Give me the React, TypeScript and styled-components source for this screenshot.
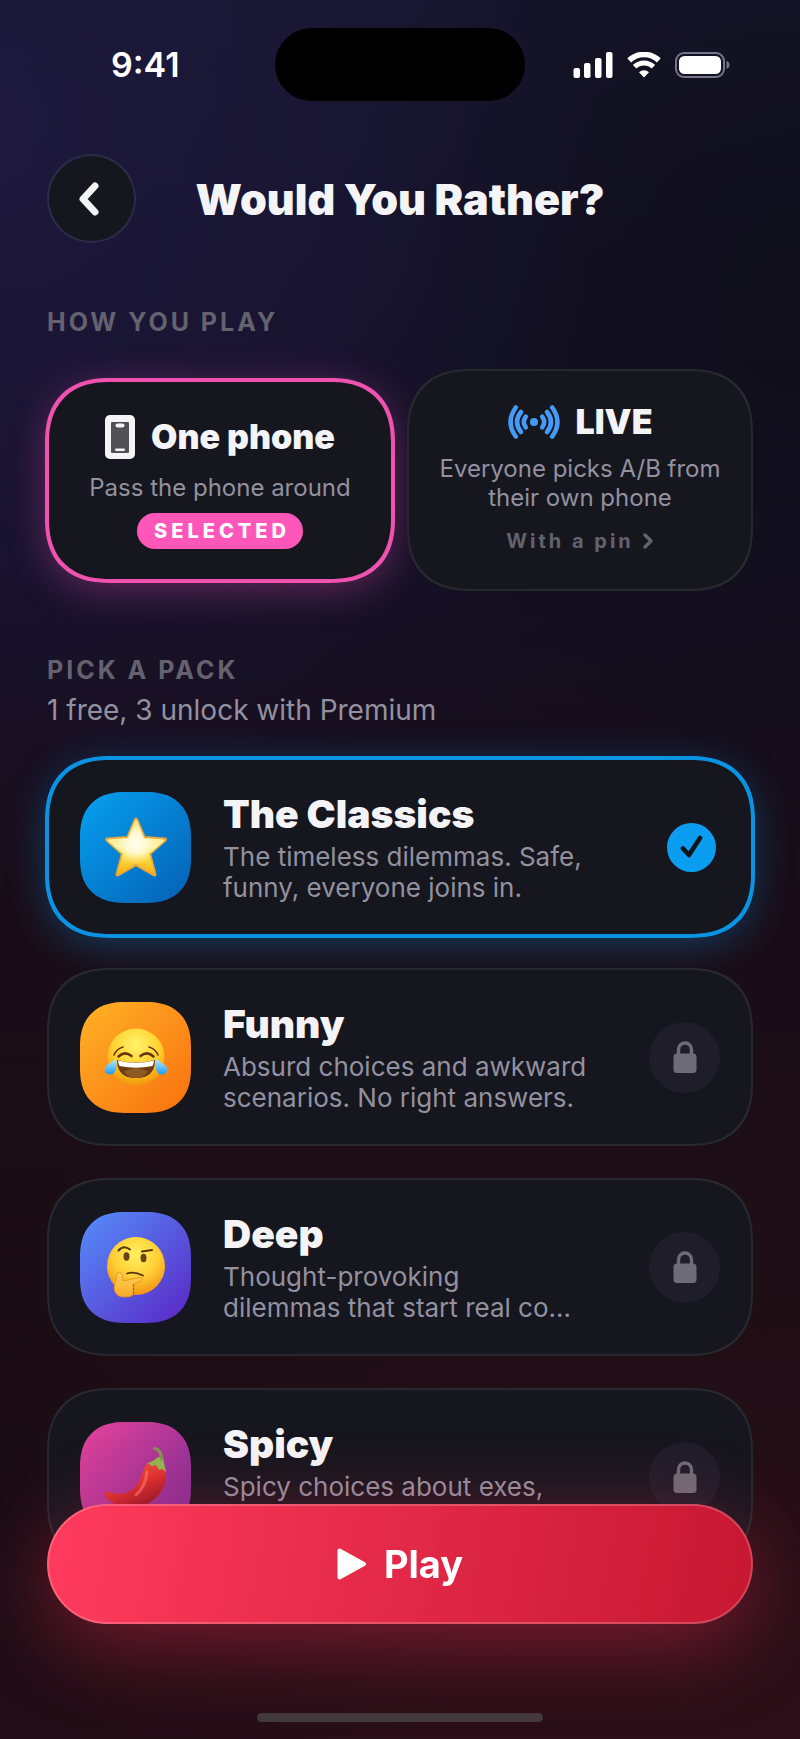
import React, { useState } from 'react';
import styled, { createGlobalStyle, css } from 'styled-components';

const GlobalStyle = createGlobalStyle`
  *, *::before, *::after { box-sizing: border-box; }
  html { background: #0d0d14; }
  body { margin: 0; }
  button { font: inherit; color: inherit; border: 0; padding: 0; margin: 0; cursor: pointer; }
  h1, h2, h3, p { margin: 0; }
`;

const color = {
  text: '#f4f4f7',
  muted: '#9391a0',
  faint: '#65626f',
  card: '#16161e',
  line: 'rgba(255, 255, 255, 0.08)',
  pink: '#ff57b9',
  blue: '#0a9df0',
};

const smoothCorners = css<{ $r: number }>`
  border-radius: ${(p) => p.$r}px;
  @supports (corner-shape: squircle) {
    border-radius: ${(p) => Math.round(p.$r * 1.25)}px;
    corner-shape: superellipse(1.25);
  }
`;

const Screen = styled.div`
  min-height: 100vh;
  padding: 0 47px 160px;
  font-family: Inter, 'Liberation Sans', sans-serif;
  color: ${color.text};
  background:
    radial-gradient(ellipse 75% 45% at 0% 8%, rgba(56, 42, 126, 0.24), rgba(56, 42, 126, 0) 100%),
    radial-gradient(ellipse 60% 32% at 100% 18%, rgba(11, 11, 14, 0.5), rgba(11, 11, 14, 0) 100%),
    radial-gradient(ellipse 60% 30% at 0% 88%, rgba(14, 11, 17, 0.45), rgba(14, 11, 17, 0) 100%),
    linear-gradient(180deg, #16142a 0%, #141024 32%, #190d17 52%, #200e15 75%, #2a0f18 100%);
`;

const StatusBar = styled.div`
  display: grid;
  grid-template-columns: 1fr 250px 1fr;
  align-items: center;
  padding: 28px 0 53px;
`;

const Clock = styled.time`
  padding-left: 64px;
  font-size: 34px;
  line-height: 40px;
  font-weight: 600;
  color: #fff;
`;

const Island = styled.div`
  height: 73px;
  border-radius: 37px;
  background: #000;
`;

const StatusIcons = styled.div`
  display: flex;
  justify-content: flex-end;
  align-items: center;
  gap: 14px;
  padding-right: 23px;
  svg { display: block; }
`;

const Header = styled.header`
  display: grid;
  grid-template-columns: 89px 1fr 89px;
  align-items: center;
`;

const BackButton = styled.button`
  display: grid;
  place-items: center;
  height: 89px;
  border: 2px solid ${color.line};
  border-radius: 50%;
  background: ${color.card};
  background-clip: padding-box;
`;

const Title = styled.h1`
  font-size: 43px;
  line-height: 52px;
  font-weight: 900;
  text-align: center;
  white-space: nowrap;
`;

const Section = styled.section`
  padding-top: 64px;
`;

const Label = styled.h2`
  font-size: 25px;
  line-height: 30px;
  font-weight: 700;
  letter-spacing: 3px;
  text-transform: uppercase;
  color: ${color.faint};
`;

const Hint = styled.p`
  padding-top: 8px;
  font-size: 28px;
  line-height: 34px;
  color: ${color.muted};
`;

const cardFace = css<{ $glow?: string }>`
  ${smoothCorners}
  background: ${color.card};
  ${(p) =>
    p.$glow
      ? css`
          outline: 4px solid ${p.$glow}ee;
          outline-offset: -2px;
          box-shadow: 0 8px 40px ${p.$glow}55;
        `
      : css`
          box-shadow: inset 0 0 0 2px ${color.line};
        `}
`;

const Modes = styled.div`
  display: grid;
  grid-template-columns: 1fr 1fr;
  align-items: center;
  gap: 14px;
  padding-top: 32px;
`;

const ModeCard = styled.button<{ $r: number; $glow?: string }>`
  ${cardFace}
  display: flex;
  flex-direction: column;
  align-items: center;
  gap: 11px;
  padding: 32px 16px;
`;

const ModeName = styled.span`
  display: flex;
  align-items: center;
  gap: 16px;
  font-size: 34px;
  line-height: 42px;
  font-weight: 900;
  svg { display: block; }
`;

const ModeText = styled.span`
  font-size: 24px;
  line-height: 29px;
  text-align: center;
  color: ${color.muted};
`;

const Badge = styled.span`
  padding: 0 13px 0 17px;
  border-radius: 18px;
  background: ${color.pink};
  font-size: 20px;
  line-height: 36px;
  font-weight: 800;
  letter-spacing: 4px;
  color: #fff;
`;

const ModeLink = styled.span`
  display: flex;
  align-items: center;
  gap: 8px;
  font-size: 20px;
  line-height: 36px;
  font-weight: 700;
  letter-spacing: 3px;
  color: ${color.faint};
`;

const Packs = styled.div`
  display: grid;
  gap: 32px;
  padding-top: 31px;
`;

const PackCard = styled.button<{ $r: number; $glow?: string }>`
  ${cardFace}
  display: grid;
  grid-template-columns: 111px 1fr 71px;
  align-items: center;
  gap: 32px;
  padding: 33px;
  text-align: left;
`;

const Tile = styled.span<{ $r: number; $from: string; $to: string }>`
  ${smoothCorners}
  display: grid;
  place-items: center;
  height: 111px;
  background: linear-gradient(135deg, ${(p) => p.$from}, ${(p) => p.$to});
  svg { display: block; }
`;

const PackText = styled.span`
  display: grid;
  gap: 4px;
  min-width: 0;
  white-space: pre-line;
`;

const PackName = styled.span`
  font-size: 39px;
  line-height: 46px;
  font-weight: 900;
`;

const PackBlurb = styled.span`
  font-size: 26px;
  line-height: 31px;
  color: ${color.muted};
`;

const Lock = styled.span`
  display: grid;
  place-items: center;
  height: 71px;
  border-radius: 50%;
  background: #1e1d29;
`;

const Check = styled.span`
  display: grid;
  place-items: center;
  justify-self: end;
  width: 49px;
  height: 49px;
  margin-right: 4px;
  border-radius: 50%;
  background: ${color.blue};
`;

const Dock = styled.footer`
  position: fixed;
  inset: auto 0 0;
  display: grid;
  justify-items: center;
  gap: 89px;
  padding: 0 47px 17px;
`;

const PlayButton = styled.button`
  display: flex;
  align-items: center;
  justify-content: center;
  gap: 17px;
  width: 100%;
  height: 120px;
  border-radius: 60px;
  background: linear-gradient(100deg, #ff3b5e, #c61731);
  box-shadow: inset 0 0 0 2px rgba(255, 255, 255, 0.2), 0 20px 84px rgba(255, 45, 85, 0.4);
  font-size: 38px;
  line-height: 46px;
  font-weight: 700;
  color: #fff;
`;

const HomeBar = styled.div`
  width: 286px;
  height: 9px;
  border-radius: 5px;
  background: #43383c;
`;

const SignalIcon = () => (
  <svg width="40" height="26" viewBox="0 0 40 26" fill="#fff" aria-hidden="true">
    <rect x="0.500" y="16" width="6.500" height="10" rx="2" />
    <rect x="11" y="11" width="6.500" height="15" rx="2" />
    <rect x="22" y="6" width="6.500" height="20" rx="2" />
    <rect x="33" y="0" width="6.500" height="26" rx="2" />
  </svg>
);

const WifiIcon = () => (
  <svg width="34" height="26" viewBox="0 0 34 26" fill="none" aria-hidden="true">
    <path d="M2.200 8.400a21.500 21.500 0 0 1 29.600 0" stroke="#fff" strokeWidth="5.600" />
    <path d="M7.600 14.800a13.400 13.400 0 0 1 18.800 0" stroke="#fff" strokeWidth="5" />
    <path d="M17 25.600l-5-5.400a7.400 7.400 0 0 1 10 0z" fill="#fff" />
  </svg>
);

const BatteryIcon = () => (
  <svg width="55" height="26" viewBox="0 0 55 26" aria-hidden="true">
    <rect x="1" y="1" width="48" height="24" rx="8" fill="none" stroke="#77748a" strokeWidth="2" />
    <rect x="4" y="4" width="42" height="18" rx="5.500" fill="#fff" />
    <path d="M51.500 9c2 .6 3 2.200 3 4s-1 3.400-3 4z" fill="#77748a" />
  </svg>
);

const PhoneIcon = () => (
  <svg width="30" height="50" viewBox="0 0 30 50" aria-hidden="true">
    <rect x="0" y="3" width="30" height="44" rx="5" fill="#f4f4f7" />
    <rect x="6" y="10" width="18" height="31" rx="1" fill="#505056" />
    <rect x="10.500" y="11.500" width="9" height="4" rx="2" fill="#f4f4f7" />
    <rect x="10" y="36.500" width="10" height="2.500" rx="1.200" fill="#f4f4f7" />
  </svg>
);

const LiveIcon = () => (
  <svg width="52" height="34" viewBox="0 0 52 34" fill="none" stroke="#449af5" strokeLinecap="round" aria-hidden="true">
    <circle cx="26" cy="17" r="4" fill="#449af5" stroke="none" />
    <path d="M17.800 11.600q-4 5.400 0 10.800M34.200 11.600q4 5.400 0 10.800" strokeWidth="4.600" />
    <path d="M13 7q-8 10 0 20M39 7q8 10 0 20" strokeWidth="4.600" />
    <path d="M7.800 2.500q-10.500 14.500 0 29M44.200 2.500q10.500 14.500 0 29" strokeWidth="4.600" />
  </svg>
);

const LockIcon = () => (
  <svg width="24" height="32" viewBox="0 0 24 32" aria-hidden="true">
    <path d="M5.500 15V8.500a6.500 6.500 0 0 1 13 0V15" fill="none" stroke="#6d6c77" strokeWidth="3.400" />
    <rect x="0.500" y="12.500" width="23" height="19.500" rx="3.500" fill="#6d6c77" />
  </svg>
);

const StarArt = () => (
  <svg width="66" height="62" viewBox="0 0 66 62" aria-hidden="true">
    <defs>
      <linearGradient id="starFill" x1="0" y1="0" x2="0" y2="1">
        <stop offset="0" stopColor="#fbe08a" />
        <stop offset="0.5" stopColor="#fff3a2" />
        <stop offset="0.7" stopColor="#fddc4c" />
        <stop offset="1" stopColor="#f9b410" />
      </linearGradient>
      <radialGradient id="starGlow" cx="0.5" cy="0.42" r="0.42">
        <stop offset="0" stopColor="#fffef2" />
        <stop offset="0.5" stopColor="#fffbd8" stopOpacity="0.85" />
        <stop offset="1" stopColor="#fff3a2" stopOpacity="0" />
      </radialGradient>
    </defs>
    <path
      d="M33 3.500L41 22L62 23.500L46 37.500L51.500 58.500L33 48L14.500 58.500L20 37.500L4 23.500L25 22Z"
      fill="url(#starFill)" stroke="#e9a63a" strokeWidth="4" strokeLinejoin="round"
    />
    <path
      d="M33 5L40.500 23L60 24.500L45 37.500L50 56.500L33 46.500L16 56.500L21 37.500L6 24.500L25.500 23Z"
      fill="url(#starFill)" stroke="url(#starFill)" strokeWidth="2.500" strokeLinejoin="round"
    />
    <path d="M33 5L40.500 23L60 24.500L45 37.500L50 56.500L33 46.500L16 56.500L21 37.500L6 24.500L25.500 23Z" fill="url(#starGlow)" />
  </svg>
);

const JoyArt = () => (
  <svg width="64" height="60" viewBox="0 0 64 60" aria-hidden="true">
    <defs>
      <radialGradient id="joyFace" cx="0.5" cy="0.28" r="0.74">
        <stop offset="0" stopColor="#fff36a" />
        <stop offset="0.55" stopColor="#ffd22e" />
        <stop offset="1" stopColor="#f0930c" />
      </radialGradient>
      <linearGradient id="joyTear" x1="0" y1="0" x2="0" y2="1">
        <stop offset="0" stopColor="#b8ecff" />
        <stop offset="1" stopColor="#1c9df0" />
      </linearGradient>
    </defs>
    <circle cx="32" cy="30" r="28.500" fill="url(#joyFace)" />
    <g fill="none" stroke="#6b3410" strokeLinecap="round">
      <path d="M10 28q3-6.500 9-8M54 28q-3-6.500-9-8" strokeWidth="1.600" />
      <path d="M14.500 29.500q6-6 13-.5M36.500 29q7-5.500 13 .5" strokeWidth="2.600" />
    </g>
    <path d="M13 33q19 5 38 0q0 18-19 18T13 33z" fill="#6e3b12" />
    <path d="M20 44.500q12-7 24 0q-4.500 6.500-12 6.500T20 44.500z" fill="#8d5a24" />
    <path d="M14 33.600q18 4.400 36 0q0 3-1.500 5.400q-16.500 3.500-33 0q-1.500-2.400-1.500-5.400z" fill="#fff" />
    <path d="M12 31.500c1 8 .5 16-6 16-4 0-6-3-5-6.500C2 37 8 36 12 31.500z" fill="url(#joyTear)" />
    <path d="M52 31.500c-1 8-.5 16 6 16 4 0 6-3 5-6.500C62 37 56 36 52 31.500z" fill="url(#joyTear)" />
  </svg>
);

const ThinkArt = () => (
  <svg width="60" height="62" viewBox="0 0 60 62" aria-hidden="true">
    <defs>
      <radialGradient id="thinkFace" cx="0.5" cy="0.3" r="0.72">
        <stop offset="0" stopColor="#fff05f" />
        <stop offset="0.55" stopColor="#ffce35" />
        <stop offset="1" stopColor="#f08f14" />
      </radialGradient>
      <linearGradient id="thinkHand" x1="0" y1="0" x2="0" y2="1">
        <stop offset="0" stopColor="#ffd451" />
        <stop offset="1" stopColor="#f6a82c" />
      </linearGradient>
    </defs>
    <circle cx="30" cy="30" r="29" fill="url(#thinkFace)" />
    <g fill="none" stroke="#5c3310" strokeLinecap="round">
      <path d="M12.500 14.500q5-6 11.500-1" strokeWidth="2" />
      <path d="M36 15.500l10-1.500" strokeWidth="2" />
      <path d="M21 37.500q7-2.500 16 2" strokeWidth="1.800" />
    </g>
    <ellipse cx="20.500" cy="20.500" rx="3" ry="4.200" fill="#6e4112" />
    <ellipse cx="37.500" cy="22" rx="3" ry="4.200" fill="#6e4112" />
    <path
      d="M12 36.500c3-1 4.500 1 4.500 4l.5 4.500l16-3.500c4-.7 4.500 3 1 4.200L27 48.500c2 1.500 1 3.500.500 4.500c1 3 0 7-4 7.500c-5 1-10 .5-12.500-2c-3.500-3.500-3-9-1.500-13c1-3 .5-7.500 2.500-9z"
      fill="url(#thinkHand)" stroke="#e8951f" strokeWidth="1"
    />
    <path d="M27.500 48.500v10" stroke="#a8570c" strokeWidth="1" fill="none" strokeDasharray="2.500 1" />
  </svg>
);

const ChiliArt = () => (
  <svg width="64" height="62" viewBox="0 0 64 62" aria-hidden="true">
    <defs>
      <linearGradient id="chiliBody" x1="0.3" y1="0.1" x2="0.75" y2="0.95">
        <stop offset="0" stopColor="#ee5442" />
        <stop offset="0.5" stopColor="#dc302e" />
        <stop offset="1" stopColor="#8e1624" />
      </linearGradient>
    </defs>
    <path
      d="M45 16C37 22 39 34 30 42C23 49 12 49 4 46C1 45-.5 47 1 50C6 58 17 61 29 61C44 61 55 52 60 40C62 34 63 28 61 22C59 14 50 13 45 16z"
      fill="url(#chiliBody)"
    />
    <path d="M43 26c-1 9-4 17-11 23" stroke="#ff8d77" strokeWidth="3" fill="none" strokeLinecap="round" opacity="0.5" />
    <path d="M43 18q7-3 11-7h5q1 7 3 15l-4-3-3 1-3-5-4 1-3-2z" fill="#8fb852" />
    <path d="M57.500 13Q57 3.500 50.500 2.500" fill="none" stroke="#7d9a4c" strokeWidth="3" strokeLinecap="round" />
  </svg>
);

type Pack = {
  id: string;
  name: string;
  blurb: string;
  from: string;
  to: string;
  art: React.ReactElement;
  locked?: boolean;
};

const packs: Pack[] = [
  { id: 'classics', name: 'The Classics', blurb: 'The timeless dilemmas. Safe,\nfunny, everyone joins in.', from: '#06a0f0', to: '#0560b4', art: <StarArt /> },
  { id: 'funny', name: 'Funny', blurb: 'Absurd choices and awkward\nscenarios. No right answers.', from: '#ffb226', to: '#f9700f', art: <JoyArt />, locked: true },
  { id: 'deep', name: 'Deep', blurb: 'Thought-provoking\ndilemmas that start real co…', from: '#558ffb', to: '#5a25c4', art: <ThinkArt />, locked: true },
  { id: 'spicy', name: 'Spicy', blurb: 'Spicy choices about exes,\nsecrets and crushes.', from: '#e8439a', to: '#6f2a94', art: <ChiliArt />, locked: true },
];

export default function App() {
  const [picked, setPicked] = useState('classics');

  return (
    <Screen>
      <GlobalStyle />
      <StatusBar>
        <Clock>9:41</Clock>
        <Island />
        <StatusIcons>
          <SignalIcon />
          <WifiIcon />
          <BatteryIcon />
        </StatusIcons>
      </StatusBar>

      <Header>
        <BackButton aria-label="Back">
          <svg width="30" height="36" viewBox="0 0 30 36" fill="none" aria-hidden="true">
            <path d="M18 5L6 18L18 31" stroke="#f4f4f7" strokeWidth="7" strokeLinecap="round" strokeLinejoin="round" />
          </svg>
        </BackButton>
        <Title>Would You Rather?</Title>
      </Header>

      <main>
        <Section>
          <Label>How you play</Label>
          <Modes>
            <ModeCard $r={50} $glow={color.pink} aria-pressed="true">
              <ModeName><PhoneIcon />One phone</ModeName>
              <ModeText>Pass the phone around</ModeText>
              <Badge>SELECTED</Badge>
            </ModeCard>
            <ModeCard $r={50}>
              <ModeName><LiveIcon />LIVE</ModeName>
              <ModeText>Everyone picks A/B from their own phone</ModeText>
              <ModeLink>
                With a pin
                <svg width="12" height="16" viewBox="0 0 12 16" fill="none" aria-hidden="true">
                  <path d="M3 2l6 6-6 6" stroke="#65626f" strokeWidth="3.400" strokeLinecap="round" strokeLinejoin="round" />
                </svg>
              </ModeLink>
            </ModeCard>
          </Modes>
        </Section>

        <Section>
          <Label>Pick a pack</Label>
          <Hint>1 free, 3 unlock with Premium</Hint>
          <Packs>
            {packs.map((pack) => (
              <PackCard
                key={pack.id}
                $r={50}
                $glow={pack.id === picked ? color.blue : undefined}
                aria-pressed={pack.id === picked}
                onClick={() => !pack.locked && setPicked(pack.id)}
              >
                <Tile $r={36} $from={pack.from} $to={pack.to}>{pack.art}</Tile>
                <PackText>
                  <PackName>{pack.name}</PackName>
                  <PackBlurb>{pack.blurb}</PackBlurb>
                </PackText>
                {pack.locked ? (
                  <Lock><LockIcon /></Lock>
                ) : (
                  <Check>
                    <svg width="24" height="24" viewBox="0 0 24 24" fill="none" aria-hidden="true">
                      <path d="M3 13.500L9 20L20 3" stroke="#14141c" strokeWidth="4.600" strokeLinecap="round" strokeLinejoin="round" />
                    </svg>
                  </Check>
                )}
              </PackCard>
            ))}
          </Packs>
        </Section>
      </main>

      <Dock>
        <PlayButton>
          <svg width="30" height="34" viewBox="0 0 30 34" aria-hidden="true">
            <path d="M2.500 3.500v27L27 17z" fill="#fff" stroke="#fff" strokeWidth="4" strokeLinejoin="round" />
          </svg>
          Play
        </PlayButton>
        <HomeBar />
      </Dock>
    </Screen>
  );
}
